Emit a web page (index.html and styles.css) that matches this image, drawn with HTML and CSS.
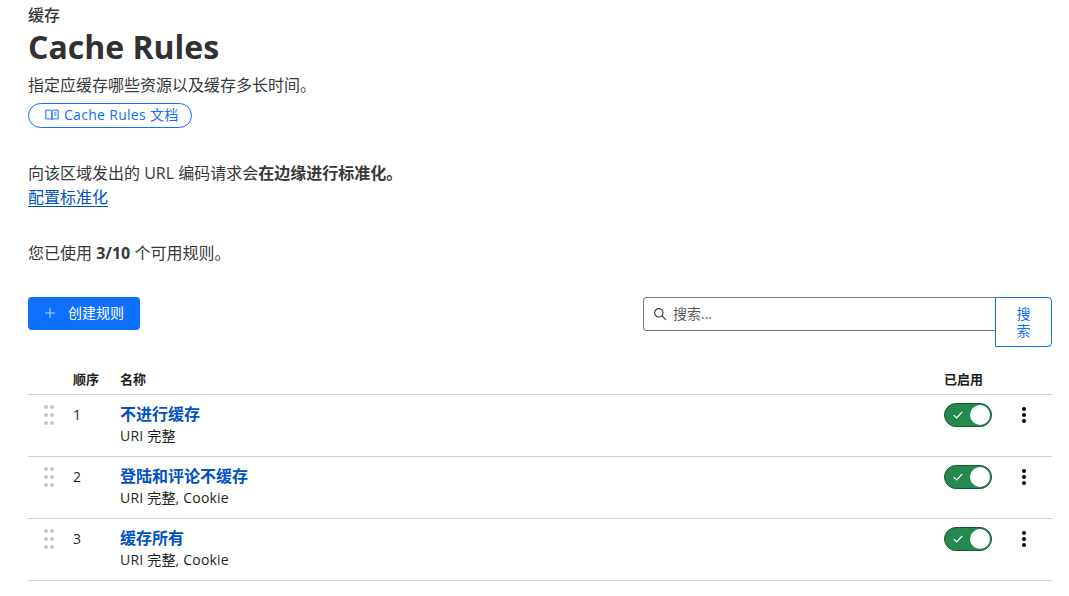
FILE: index.html
```html
<!DOCTYPE html>
<html lang="zh">
<head>
<meta charset="utf-8">
<title>Cache Rules</title>
<link rel="stylesheet" href="styles.css">
</head>
<body>
<main class="page">
  <header class="head">
    <div class="eyebrow">缓存</div>
    <h1 class="title">Cache Rules</h1>
    <p class="desc">指定应缓存哪些资源以及缓存多长时间。</p>
    <a class="doc-pill" href="#">
      <svg class="doc-icon" viewBox="0 0 14 12" width="14" height="12" fill="none" stroke="currentColor" stroke-width="1"><path d="M.8 1.200h4.700c.9 0 1.500.6 1.500 1.400v8c-.4-.5-.9-.7-1.500-.7H.8zM13.200 1.200H8.500c-.9 0-1.500.6-1.500 1.400v8c.4-.5.9-.7 1.500-.7h4.700zM9 4h2.500M9 6h2.500"/></svg>
      <span>Cache Rules 文档</span>
    </a>
  </header>
  <section class="note">
    <p>向该区域发出的 URL 编码请求会<strong>在边缘进行标准化。</strong></p>
    <a class="link" href="#">配置标准化</a>
  </section>
  <p class="usage">您已使用 <strong>3/10</strong> 个可用规则。</p>
  <div class="toolbar">
    <button class="create" type="button">
      <svg viewBox="0 0 10 10" width="10" height="10" fill="none" stroke="#b9d6ff" stroke-width="1"><path d="M5 0v10M0 5h10"/></svg>
      <span>创建规则</span>
    </button>
    <form class="search">
      <div class="search-box">
        <svg viewBox="0 0 14 14" width="14" height="14" fill="none" stroke="#36393a" stroke-width="1.200"><circle cx="5.800" cy="5.800" r="4.200"/><path d="M8.900 8.900l4 4"/></svg>
        <span class="placeholder">搜索...</span>
      </div>
      <button class="search-btn" type="button">搜索</button>
    </form>
  </div>
  <div class="table">
    <div class="row head-row">
      <div class="c-drag"></div>
      <div class="c-order">顺序</div>
      <div class="c-name">名称</div>
      <div class="c-on">已启用</div>
      <div class="c-menu"></div>
    </div>
    <div class="row">
      <div class="c-drag"><span class="grip"><i></i><i></i><i></i><i></i><i></i><i></i></span></div>
      <div class="c-order">1</div>
      <div class="c-name"><a class="rule" href="#">不进行缓存</a><div class="meta">URI 完整</div></div>
      <div class="c-on"><span class="switch"><svg viewBox="0 0 10 8" width="10" height="8" fill="none" stroke="#fff" stroke-width="1.200"><path d="M.8 4.200L3.600 7 9.200 1"/></svg><span class="knob"></span></span></div>
      <div class="c-menu"><span class="dots"><i></i><i></i><i></i></span></div>
    </div>
    <div class="row">
      <div class="c-drag"><span class="grip"><i></i><i></i><i></i><i></i><i></i><i></i></span></div>
      <div class="c-order">2</div>
      <div class="c-name"><a class="rule" href="#">登陆和评论不缓存</a><div class="meta">URI 完整, Cookie</div></div>
      <div class="c-on"><span class="switch"><svg viewBox="0 0 10 8" width="10" height="8" fill="none" stroke="#fff" stroke-width="1.200"><path d="M.8 4.200L3.600 7 9.200 1"/></svg><span class="knob"></span></span></div>
      <div class="c-menu"><span class="dots"><i></i><i></i><i></i></span></div>
    </div>
    <div class="row">
      <div class="c-drag"><span class="grip"><i></i><i></i><i></i><i></i><i></i><i></i></span></div>
      <div class="c-order">3</div>
      <div class="c-name"><a class="rule" href="#">缓存所有</a><div class="meta">URI 完整, Cookie</div></div>
      <div class="c-on"><span class="switch"><svg viewBox="0 0 10 8" width="10" height="8" fill="none" stroke="#fff" stroke-width="1.200"><path d="M.8 4.200L3.600 7 9.200 1"/></svg><span class="knob"></span></span></div>
      <div class="c-menu"><span class="dots"><i></i><i></i><i></i></span></div>
    </div>
  </div>
</main>
</body>
</html>
```
FILE: styles.css
```css
* { box-sizing: border-box; }
html, body { margin: 0; padding: 0; background: #fff; }
body {
  font-family: "Open Sans", "Noto Sans CJK SC", sans-serif;
  color: #36393a;
  font-size: 16px;
  line-height: 24px;
}
.page { padding: 4px 17px 0 28px; }
p { margin: 0; }
.eyebrow { font-size: 16px; line-height: 22px; font-weight: 500; }
.title { margin: 0; font-size: 32px; line-height: 42px; font-weight: 700; color: #313131; }
.desc { margin-top: 5px; line-height: 24px; }
.doc-pill {
  display: inline-flex; align-items: center; gap: 5px;
  width: 164px; height: 25px; margin-top: 6px; padding: 0 0 2px 16px;
  border: 1px solid #0f6fff; border-radius: 13px;
  color: #0f6fff; font-size: 14px; line-height: 22px; text-decoration: none;
}
.doc-pill span { letter-spacing: .3px; white-space: nowrap; }
.doc-icon { flex: none; }
.note { margin-top: 33px; }
.note strong, .usage strong { font-weight: 700; }
.link { color: #0051c3; text-decoration: underline; text-underline-offset: 3px; display: inline-block; line-height: 25px; }
.usage { margin-top: 31px; }
.toolbar { display: flex; justify-content: space-between; align-items: flex-start; margin-top: 32px; }
.create {
  display: flex; align-items: center; gap: 13px;
  width: 112px; height: 33px; padding: 0 0 2px 17px;
  background: #0f6fff; color: #fff; border: 0; border-radius: 4px;
  font: inherit; font-size: 14px;
}
.search { display: flex; width: 409px; }
.search-box {
  flex: 1; height: 34px; display: flex; align-items: center; gap: 6px; padding-left: 9px;
  border: 1px solid #797979; border-right: 0; border-radius: 4px 0 0 4px;
}
.placeholder { font-size: 14px; color: #5c5c5c; }
.search-btn {
  width: 57px; height: 50px; padding: 0 15px;
  background: #fff; color: #0f6fff; border: 1px solid #0f6fff; border-radius: 0 4px 4px 0;
  font: inherit; font-size: 14px; line-height: 17px;
}
.table { margin-top: 15px; }
.row { display: flex; height: 62px; border-bottom: 1px solid #cfcfcf; color: #1d1f20; font-size: 14px; }
.head-row { height: 33px; align-items: center; font-size: 13px; font-weight: 700; color: #1d1f20; padding-top: 2px; }
.c-drag { width: 45px; flex: none; padding: 10px 0 0 16px; }
.head-row .c-drag { padding: 0; }
.c-order { width: 47px; flex: none; padding-top: 8px; }
.head-row .c-order, .head-row .c-name, .head-row .c-on { padding-top: 0; }
.c-name { flex: 1; padding-top: 7px; }
.rule { display: block; color: #0051c3; font-size: 16px; font-weight: 700; text-decoration: none; line-height: 24px; }
.meta { font-size: 14px; line-height: 20px; letter-spacing: .2px; }
.c-on { width: 78px; flex: none; padding-top: 8px; }
.c-menu { width: 30px; flex: none; padding: 12px 0 0 0; }
.switch {
  position: relative; display: flex; align-items: center; width: 48px; height: 24px; padding-left: 8px;
  background: #23894f; border: 1px solid #14592f; border-radius: 12px;
}
.knob { position: absolute; right: 1px; top: 1px; width: 20px; height: 20px; border-radius: 50%; background: #fff; }
.grip { display: grid; grid-template-columns: 4px 4px; column-gap: 2px; row-gap: 4px; }
.grip i { width: 4px; height: 4px; border-radius: 50%; background: #c4c4c4; }
.dots { display: flex; flex-direction: column; gap: 2px; width: 4px; }
.dots i { width: 4px; height: 4px; border-radius: 50%; background: #000; }
```
